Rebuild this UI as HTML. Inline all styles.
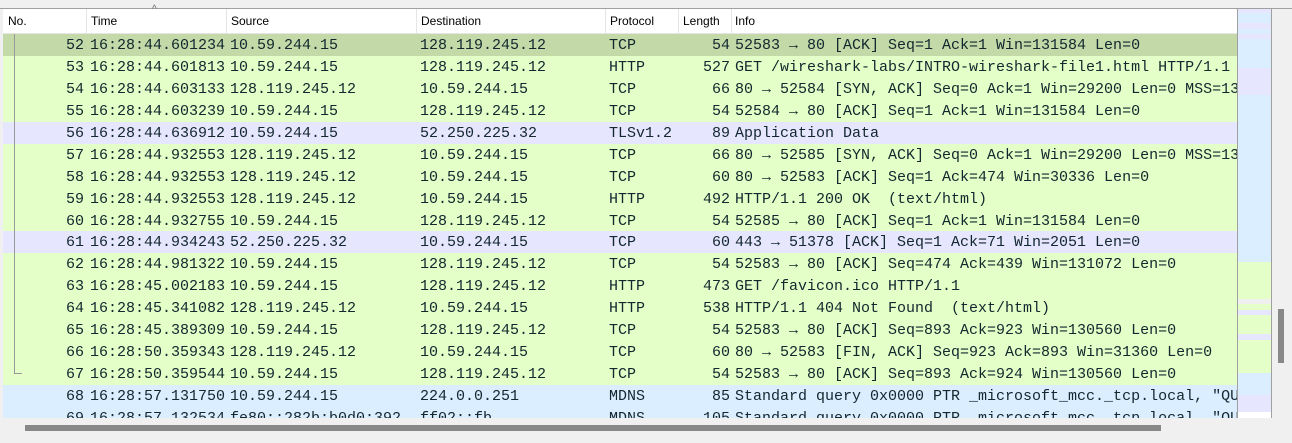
<!DOCTYPE html><html><head><style>
body{margin:0;width:1292px;height:443px;background:#f0f0f0;position:relative;overflow:hidden;font-family:"Liberation Sans",sans-serif}
.top{position:absolute;left:0;top:0;width:1292px;height:8px;background:#f0f0f0;border-bottom:1px solid #a0a0a0}
.hdr{position:absolute;left:3px;top:9px;width:1234px;height:24px;background:#fff;border-bottom:1px solid #e5e5e5;font-size:12px}
.hdr span{position:absolute;top:5px}
.sep{position:absolute;top:0;width:1px;height:24px;background:#e5e5e5}
.list{position:absolute;left:3px;top:34px;width:1234px;height:384px;background:#fff;overflow:hidden}
.r{position:relative;height:21.95px;font-family:"Liberation Mono",monospace;font-size:15px;line-height:23px;white-space:pre;color:#12272e}
.r span{position:absolute;top:0}
.g{background:#e4ffc7}.p{background:#e7e6ff}.b{background:#daeeff}.s{background:#c3d9a8}
.mini{position:absolute;left:1237px;top:9px;width:33px;height:409px;background:#daeeff;border-left:1px solid #a0a0a0;border-right:1px solid #a0a0a0}
.mini div{position:absolute;left:0;width:33px}
.vs{position:absolute;left:1278px;top:309px;width:6px;height:54px;background:#888}
.hs{position:absolute;left:25px;top:425px;width:1136px;height:6px;background:#888}
.tree{position:absolute;left:14px;top:34px;width:1px;height:340px;background:#999}
.elb{position:absolute;left:14px;top:373px;width:8px;height:1px;background:#999}
</style></head><body>
<div class="top"></div>
<div class="hdr">
<span style="left:5px">No.</span><span style="left:88px">Time</span><span style="left:228px">Source</span><span style="left:418px">Destination</span><span style="left:607px">Protocol</span><span style="left:680px">Length</span><span style="left:732px">Info</span>
<span style="left:149px;top:-5px;font-size:10px;color:#666">^</span>
<div class="sep" style="left:83px"></div><div class="sep" style="left:223px"></div><div class="sep" style="left:413px"></div><div class="sep" style="left:602px"></div><div class="sep" style="left:675px"></div><div class="sep" style="left:728px"></div>
</div>
<div class="list" id="l"></div>
<div class="tree"></div><div class="elb"></div>
<div class="mini">
<div style="top:0;height:4px;background:#e7e6ff"></div>
<div style="top:14px;height:6px;background:#e7e6ff"></div>
<div style="top:25px;height:5px;background:#e7e6ff"></div>
<div style="top:59px;height:27px;background:#e7e6ff"></div>
<div style="top:253px;height:37px;background:#e4ffc7"></div>
<div style="top:290px;height:5px;background:#f0f0f0"></div>
<div style="top:295px;height:6px;background:#e4ffc7"></div>
<div style="top:301px;height:5px;background:#e7e6ff"></div>
<div style="top:306px;height:19px;background:#e4ffc7"></div>
<div style="top:325px;height:6px;background:#e7e6ff"></div>
<div style="top:331px;height:33px;background:#e4ffc7"></div>
<div style="top:386px;height:17px;background:#e7e6ff"></div>
<div style="top:403px;height:6px;background:#fff"></div>
</div>
<div class="vs"></div><div class="hs"></div>
<script>
var d=[["s",52,"16:28:44.601234","10.59.244.15","128.119.245.12","TCP",54,"52583 → 80 [ACK] Seq=1 Ack=1 Win=131584 Len=0"],
["g",53,"16:28:44.601813","10.59.244.15","128.119.245.12","HTTP",527,"GET /wireshark-labs/INTRO-wireshark-file1.html HTTP/1.1"],
["g",54,"16:28:44.603133","128.119.245.12","10.59.244.15","TCP",66,"80 → 52584 [SYN, ACK] Seq=0 Ack=1 Win=29200 Len=0 MSS=13"],
["g",55,"16:28:44.603239","10.59.244.15","128.119.245.12","TCP",54,"52584 → 80 [ACK] Seq=1 Ack=1 Win=131584 Len=0"],
["p",56,"16:28:44.636912","10.59.244.15","52.250.225.32","TLSv1.2",89,"Application Data"],
["g",57,"16:28:44.932553","128.119.245.12","10.59.244.15","TCP",66,"80 → 52585 [SYN, ACK] Seq=0 Ack=1 Win=29200 Len=0 MSS=13"],
["g",58,"16:28:44.932553","128.119.245.12","10.59.244.15","TCP",60,"80 → 52583 [ACK] Seq=1 Ack=474 Win=30336 Len=0"],
["g",59,"16:28:44.932553","128.119.245.12","10.59.244.15","HTTP",492,"HTTP/1.1 200 OK  (text/html)"],
["g",60,"16:28:44.932755","10.59.244.15","128.119.245.12","TCP",54,"52585 → 80 [ACK] Seq=1 Ack=1 Win=131584 Len=0"],
["p",61,"16:28:44.934243","52.250.225.32","10.59.244.15","TCP",60,"443 → 51378 [ACK] Seq=1 Ack=71 Win=2051 Len=0"],
["g",62,"16:28:44.981322","10.59.244.15","128.119.245.12","TCP",54,"52583 → 80 [ACK] Seq=474 Ack=439 Win=131072 Len=0"],
["g",63,"16:28:45.002183","10.59.244.15","128.119.245.12","HTTP",473,"GET /favicon.ico HTTP/1.1"],
["g",64,"16:28:45.341082","128.119.245.12","10.59.244.15","HTTP",538,"HTTP/1.1 404 Not Found  (text/html)"],
["g",65,"16:28:45.389309","10.59.244.15","128.119.245.12","TCP",54,"52583 → 80 [ACK] Seq=893 Ack=923 Win=130560 Len=0"],
["g",66,"16:28:50.359343","128.119.245.12","10.59.244.15","TCP",60,"80 → 52583 [FIN, ACK] Seq=923 Ack=893 Win=31360 Len=0"],
["g",67,"16:28:50.359544","10.59.244.15","128.119.245.12","TCP",54,"52583 → 80 [ACK] Seq=893 Ack=924 Win=130560 Len=0"],
["b",68,"16:28:57.131750","10.59.244.15","224.0.0.251","MDNS",85,"Standard query 0x0000 PTR _microsoft_mcc._tcp.local, \"QU"],
["b",69,"16:28:57.132534","fe80::282b:b0d0:392","ff02::fb","MDNS",105,"Standard query 0x0000 PTR _microsoft_mcc._tcp.local, \"QU"]];
var h="";d.forEach(function(r){h+='<div class="r '+r[0]+'"><span style="right:1153px">'+r[1]+'</span><span style="left:87px">'+r[2]+'</span><span style="left:227px">'+r[3]+'</span><span style="left:417px">'+r[4]+'</span><span style="left:606px">'+r[5]+'</span><span style="right:507px">'+r[6]+'</span><span style="left:732px">'+r[7]+'</span></div>'});
document.getElementById("l").innerHTML=h;
</script>
</body></html>
